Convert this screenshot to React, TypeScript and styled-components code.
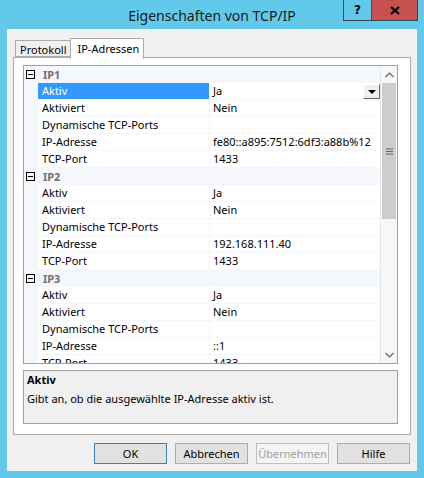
import React from "react";
import styled, { createGlobalStyle } from "styled-components";

const Global = createGlobalStyle`
  html, body { margin: 0; padding: 0; }
  body { font-family: "Noto Sans", "Open Sans", sans-serif; }
  #root { width: 424px; height: 478px; }
`;

const FONT = `"Noto Sans", "Open Sans", sans-serif`;

const Frame = styled.div`
  width: 424px;
  height: 478px;
  box-sizing: border-box;
  background: #63c9ea;
  padding: 0 7px 7px 7px;
  display: flex;
  flex-direction: column;
  font-family: ${FONT};
`;

const TitleBar = styled.div`
  height: 29px;
  display: grid;
  grid-template-columns: 1fr auto 1fr;
  align-items: start;
  margin: 0 -7px 0 -7px;
`;

const Title = styled.div`
  grid-column: 2;
  font-size: 14px;
  line-height: 15px;
  padding-top: 8px;
  color: #1a1a1a;
`;

const Caption = styled.div`
  grid-column: 3;
  justify-self: end;
  display: flex;
  margin-right: 6px;
  border: 1px solid #3a4a55;
  border-top: none;
  height: 21px;
  box-sizing: border-box;
`;

const CapBtn = styled.div<{ $close?: boolean }>`
  width: ${(p) => (p.$close ? 45 : 27)}px;
  height: 20px;
  display: flex;
  align-items: center;
  justify-content: center;
  background: ${(p) => (p.$close ? "#c75050" : "transparent")};
  border-left: ${(p) => (p.$close ? "1px solid #3a4a55" : "none")};
  font-family: "DejaVu Sans", sans-serif;
  font-weight: bold;
  font-size: 12px;
  color: #000;
`;

const Client = styled.div`
  flex: 1;
  background: #f0f0f0;
  display: flex;
  flex-direction: column;
  padding: 9px 6px 0 6px;
  box-sizing: border-box;
`;

const TabStrip = styled.div`
  display: flex;
  align-items: flex-end;
  padding-left: 2px;
  height: 19px;
  position: relative;
  z-index: 1;
`;

const Tab = styled.div<{ $active?: boolean }>`
  box-sizing: border-box;
  height: ${(p) => (p.$active ? 21 : 17)}px;
  margin-bottom: ${(p) => (p.$active ? -2 : 0)}px;
  margin-left: ${(p) => (p.$active ? -1 : 0)}px;
  padding: ${(p) => (p.$active ? "2px 4px 0 6px" : "1px 4px 0 4px")};
  border: 1px solid #acacac;
  border-bottom: ${(p) => (p.$active ? "none" : "1px solid #acacac")};
  background: ${(p) => (p.$active ? "#fff" : "#f0f0f0")};
  font-size: 11px;
  line-height: 15px;
  color: #000;
`;

const Panel = styled.div`
  box-sizing: border-box;
  height: 378px;
  border: 1px solid #acacac;
  background: #fff;
  padding: 7px 12px 0 9px;
  display: flex;
  flex-direction: column;
  gap: 6px;
`;

const Grid = styled.div`
  box-sizing: border-box;
  height: 299px;
  border: 1px solid #a0a0a0;
  display: flex;
  overflow: hidden;
  background: #fff;
`;

const Rows = styled.div`
  flex: 1;
  display: flex;
  flex-direction: column;
  overflow: hidden;
`;

const CatRow = styled.div`
  height: 17px;
  flex: none;
  display: flex;
  align-items: center;
  background: #f4f7fc;
  font-size: 11px;
  font-weight: bold;
  color: #707070;
`;

const Minus = styled.div`
  width: 9px;
  height: 9px;
  box-sizing: border-box;
  border: 1px solid #000;
  margin: 0 8px 0 2px;
  display: flex;
  align-items: center;
  justify-content: center;
  &::after {
    content: "";
    width: 5px;
    height: 1px;
    background: #000;
  }
`;

const PropRow = styled.div`
  height: 17px;
  flex: none;
  display: grid;
  grid-template-columns: 14px 171px 1fr;
  background: #f4f7fc;
`;

const NameCell = styled.div<{ $sel?: boolean }>`
  height: 16px;
  padding-left: 4px;
  font-size: 11px;
  line-height: 16px;
  white-space: nowrap;
  overflow: hidden;
  background: ${(p) => (p.$sel ? "#3399ff" : "#fff")};
  color: ${(p) => (p.$sel ? "#fff" : "#000")};
`;

const ValueCell = styled.div`
  height: 16px;
  margin-left: 1px;
  padding-left: 3px;
  font-size: 11px;
  line-height: 16px;
  white-space: nowrap;
  overflow: hidden;
  background: #fff;
  color: #000;
  display: flex;
  justify-content: space-between;
`;

const DropBtn = styled.div`
  width: 17px;
  height: 15px;
  box-sizing: border-box;
  margin-top: 1px;
  background: #f0f0f0;
  border-top: 1px solid #fff;
  border-left: 1px solid #fff;
  border-right: 1px solid #696969;
  border-bottom: 1px solid #696969;
  display: flex;
  align-items: center;
  justify-content: center;
  &::after {
    content: "";
    border-left: 4px solid transparent;
    border-right: 4px solid transparent;
    border-top: 4px solid #000;
  }
`;

const ScrollBar = styled.div`
  width: 17px;
  flex: none;
  display: flex;
  flex-direction: column;
  background: #f7f7f7;
  border-left: 1px solid #e6e6e6;
  box-sizing: border-box;
`;

const Arrow = styled.div`
  height: 17px;
  flex: none;
  display: flex;
  align-items: center;
  justify-content: center;
  background: #f7f7f7;
`;

const Thumb = styled.div`
  height: 136px;
  flex: none;
  margin: 0 1px;
  background: #cdcdcd;
  display: flex;
  align-items: center;
  justify-content: center;
`;

const Track = styled.div`
  flex: 1;
`;

const Desc = styled.div`
  box-sizing: border-box;
  height: 54px;
  border: 1px solid #a0a0a0;
  background: #f0f0f0;
  padding: 1px 3px;
  font-size: 11px;
  line-height: 16px;
  color: #000;
`;

const DescTitle = styled.div`
  font-weight: bold;
  margin-bottom: 3px;
`;

const Buttons = styled.div`
  display: flex;
  justify-content: flex-end;
  gap: 8px;
  margin-top: 8px;
  padding-right: 1px;
`;

const Btn = styled.div<{ $default?: boolean; $disabled?: boolean }>`
  width: 73px;
  height: 21px;
  box-sizing: border-box;
  display: flex;
  align-items: center;
  justify-content: center;
  font-size: 11px;
  border: 1px solid
    ${(p) => (p.$default ? "#3c7fb1" : p.$disabled ? "#bfbfbf" : "#adadad")};
  background: ${(p) => (p.$disabled ? "#f4f4f4" : "#e1e1e1")};
  color: ${(p) => (p.$disabled ? "#a0a0a0" : "#000")};
`;

type Prop = { name: string; value: string };
const groups: { title: string; props: Prop[] }[] = [
  {
    title: "IP1",
    props: [
      { name: "Aktiv", value: "Ja" },
      { name: "Aktiviert", value: "Nein" },
      { name: "Dynamische TCP-Ports", value: "" },
      { name: "IP-Adresse", value: "fe80::a895:7512:6df3:a88b%12" },
      { name: "TCP-Port", value: "1433" },
    ],
  },
  {
    title: "IP2",
    props: [
      { name: "Aktiv", value: "Ja" },
      { name: "Aktiviert", value: "Nein" },
      { name: "Dynamische TCP-Ports", value: "" },
      { name: "IP-Adresse", value: "192.168.111.40" },
      { name: "TCP-Port", value: "1433" },
    ],
  },
  {
    title: "IP3",
    props: [
      { name: "Aktiv", value: "Ja" },
      { name: "Aktiviert", value: "Nein" },
      { name: "Dynamische TCP-Ports", value: "" },
      { name: "IP-Adresse", value: "::1" },
      { name: "TCP-Port", value: "1433" },
    ],
  },
];

export default function App() {
  return (
    <>
      <Global />
      <Frame>
        <TitleBar>
          <Title>Eigenschaften von TCP/IP</Title>
          <Caption>
            <CapBtn>?</CapBtn>
            <CapBtn $close>
              <svg width="10" height="9" viewBox="0 0 10 9">
                <path d="M1 1 L9 8 M9 1 L1 8" stroke="#000" strokeWidth="2.2" />
              </svg>
            </CapBtn>
          </Caption>
        </TitleBar>
        <Client>
          <TabStrip>
            <Tab>Protokoll</Tab>
            <Tab $active>IP-Adressen</Tab>
          </TabStrip>
          <Panel>
            <Grid>
              <Rows>
                {groups.map((g, gi) => (
                  <React.Fragment key={g.title}>
                    <CatRow>
                      <Minus />
                      {g.title}
                    </CatRow>
                    {g.props.map((p, pi) => {
                      const sel = gi === 0 && pi === 0;
                      return (
                        <PropRow key={p.name}>
                          <span />
                          <NameCell $sel={sel}>{p.name}</NameCell>
                          <ValueCell>
                            <span>{p.value}</span>
                            {sel && <DropBtn />}
                          </ValueCell>
                        </PropRow>
                      );
                    })}
                  </React.Fragment>
                ))}
              </Rows>
              <ScrollBar>
                <Arrow>
                  <svg width="9" height="6" viewBox="0 0 9 6">
                    <path d="M0.5 5 L4.5 1 L8.5 5" stroke="#606060" strokeWidth="1.1" fill="none" />
                  </svg>
                </Arrow>
                <Thumb>
                  <svg width="7" height="7" viewBox="0 0 7 7">
                    <path d="M0 1 H7 M0 3.5 H7 M0 6 H7" stroke="#606060" strokeWidth="1" />
                  </svg>
                </Thumb>
                <Track />
                <Arrow>
                  <svg width="9" height="6" viewBox="0 0 9 6">
                    <path d="M0.5 1 L4.5 5 L8.5 1" stroke="#606060" strokeWidth="1.1" fill="none" />
                  </svg>
                </Arrow>
              </ScrollBar>
            </Grid>
            <Desc>
              <DescTitle>Aktiv</DescTitle>
              Gibt an, ob die ausgewählte IP-Adresse aktiv ist.
            </Desc>
          </Panel>
          <Buttons>
            <Btn $default>OK</Btn>
            <Btn>Abbrechen</Btn>
            <Btn $disabled>Übernehmen</Btn>
            <Btn>Hilfe</Btn>
          </Buttons>
        </Client>
      </Frame>
    </>
  );
}
